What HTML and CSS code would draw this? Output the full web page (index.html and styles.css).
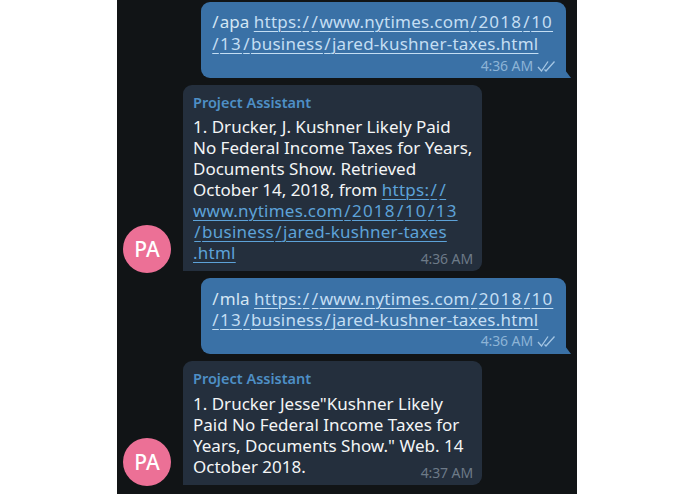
FILE: index.html
```html
<!DOCTYPE html>
<html lang="en">
<head>
<meta charset="utf-8">
<title>Project Assistant</title>
<link rel="stylesheet" href="styles.css">
</head>
<body>
<main class="phone">
  <div class="row out">
    <div class="bubble sent">
      <p class="text"><i class="sl">/</i>apa <a href="#">https:<i class="sl">/</i><i class="sl">/</i>www.nytimes.com<i class="sl">/</i><i class="n">2018</i><i class="sl">/</i><i class="n">10</i><br><i class="sl">/</i><i class="n">13</i><i class="sl">/</i>business<i class="sl">/</i>jared-kushner-taxes.html</a></p>
      <div class="meta"><span>4:36 AM</span>
        <svg class="ticks" viewBox="0 0 20 12"><path d="M1 7l3.500 4L11 1.500M7.500 9.500L9 11 17.500 1.500"/></svg>
      </div>
    </div>
    <span class="tail"></span>
  </div>
  <div class="row in tall">
    <div class="avatar">PA</div>
    <div class="bubble received">
      <div class="name">Project Assistant</div>
      <p class="text">1. Drucker, J. Kushner Likely Paid<br>No Federal Income Taxes for Years,<br>Documents Show. Retrieved<br>October 14, 2018, from <a href="#">https:<i class="sl">/</i><i class="sl">/</i><br>www.nytimes.com<i class="sl">/</i><i class="n">2018</i><i class="sl">/</i><i class="n">10</i><i class="sl">/</i><i class="n">13</i><br><i class="sl">/</i>business<i class="sl">/</i>jared-kushner-taxes<br>.html</a></p>
      <div class="meta overlap"><span>4:36 AM</span></div>
    </div>
  </div>
  <div class="row out">
    <div class="bubble sent second">
      <p class="text"><i class="sl">/</i>mla <a href="#">https:<i class="sl">/</i><i class="sl">/</i>www.nytimes.com<i class="sl">/</i><i class="n">2018</i><i class="sl">/</i><i class="n">10</i><br><i class="sl">/</i><i class="n">13</i><i class="sl">/</i>business<i class="sl">/</i>jared-kushner-taxes.html</a></p>
      <div class="meta"><span>4:36 AM</span>
        <svg class="ticks" viewBox="0 0 20 12"><path d="M1 7l3.500 4L11 1.500M7.500 9.500L9 11 17.500 1.500"/></svg>
      </div>
    </div>
    <span class="tail"></span>
  </div>
  <div class="row in short">
    <div class="avatar">PA</div>
    <div class="bubble received">
      <div class="name">Project Assistant</div>
      <p class="text">1. Drucker Jesse"Kushner Likely<br>Paid No Federal Income Taxes for<br>Years, Documents Show." Web. 14<br>October 2018.</p>
      <div class="meta overlap"><span>4:37 AM</span></div>
    </div>
  </div>
</main>
</body>
</html>
```
FILE: styles.css
```css
html, body {
  margin: 0;
  padding: 0;
  height: 100%;
  background: #fff;
  overflow: hidden;
}
body {
  font-family: "Noto Sans", "Open Sans", sans-serif;
}
.phone {
  width: 460px;
  height: 494px;
  margin-left: 117px;
  background: #111416;
  box-sizing: border-box;
  padding-top: 2px;
  display: flex;
  flex-direction: column;
  gap: 7px;
}
.row {
  display: flex;
  align-items: flex-end;
  position: relative;
}
.row.out {
  margin-left: 84px;
  width: 365px;
}
.row.in {
  margin-left: 6px;
  gap: 12px;
}
.bubble {
  box-sizing: border-box;
  padding: 9px 10px 0;
  position: relative;
}
.sent {
  width: 365px;
  height: 76px;
  background: #3a71a6;
  border-radius: 9px 9px 0 9px;
}
.sent.second { padding-top: 10px; }
.received {
  width: 299px;
  background: #242f3d;
  border-radius: 9px 9px 9px 0;
  padding-top: 8px;
}
.tall .received { height: 186px; }
.short .received { height: 124px; }
.tail {
  position: absolute;
  right: -5px;
  bottom: 0;
  width: 6px;
  height: 8px;
  background: #3a71a6;
  clip-path: polygon(0 0, 100% 100%, 0 100%);
}
.text {
  margin: 0;
  font-size: 17px;
  line-height: 21px;
  color: #f3f5f6;
  white-space: nowrap;
}
.text a {
  letter-spacing: 0.25px;
  text-decoration: underline;
  text-decoration-thickness: 1px;
  text-underline-offset: 3px;
}
.sl {
  font-style: normal;
  margin: 0 1.250px;
}
.n {
  font-style: normal;
  letter-spacing: 1.200px;
}
.sent .text {
  color: #d5e6f3;
  line-height: 22px;
}
.sent.second .text { line-height: 21px; }
.sent .text a { color: #c4def3; }
.received .text { margin-top: 6px; }
.tall .received .text { margin-top: 5px; }
.received .text a { color: #5da2d8; }
.name {
  font-size: 14.500px;
  line-height: 18px;
  font-weight: 600;
  color: #4e8fc6;
}
.meta {
  display: flex;
  justify-content: flex-end;
  align-items: center;
  gap: 4px;
  font-size: 14px;
  line-height: 16px;
  letter-spacing: -0.1px;
  color: #8db4d6;
  margin-top: 3px;
  margin-right: -1px;
}
.meta.overlap {
  position: absolute;
  right: 9px;
  bottom: 4px;
  margin: 0;
  color: #6d7a88;
}
.ticks {
  width: 20px;
  height: 12px;
  fill: none;
  stroke: #a5c6e3;
  stroke-width: 1.300;
}
.avatar {
  width: 48px;
  height: 48px;
  border-radius: 50%;
  background: #ec7096;
  color: #fff;
  font-size: 21px;
  font-weight: 500;
  display: flex;
  align-items: center;
  justify-content: center;
  margin-bottom: -2px;
  flex: none;
}
.short .avatar { margin-bottom: -1px; }
```
